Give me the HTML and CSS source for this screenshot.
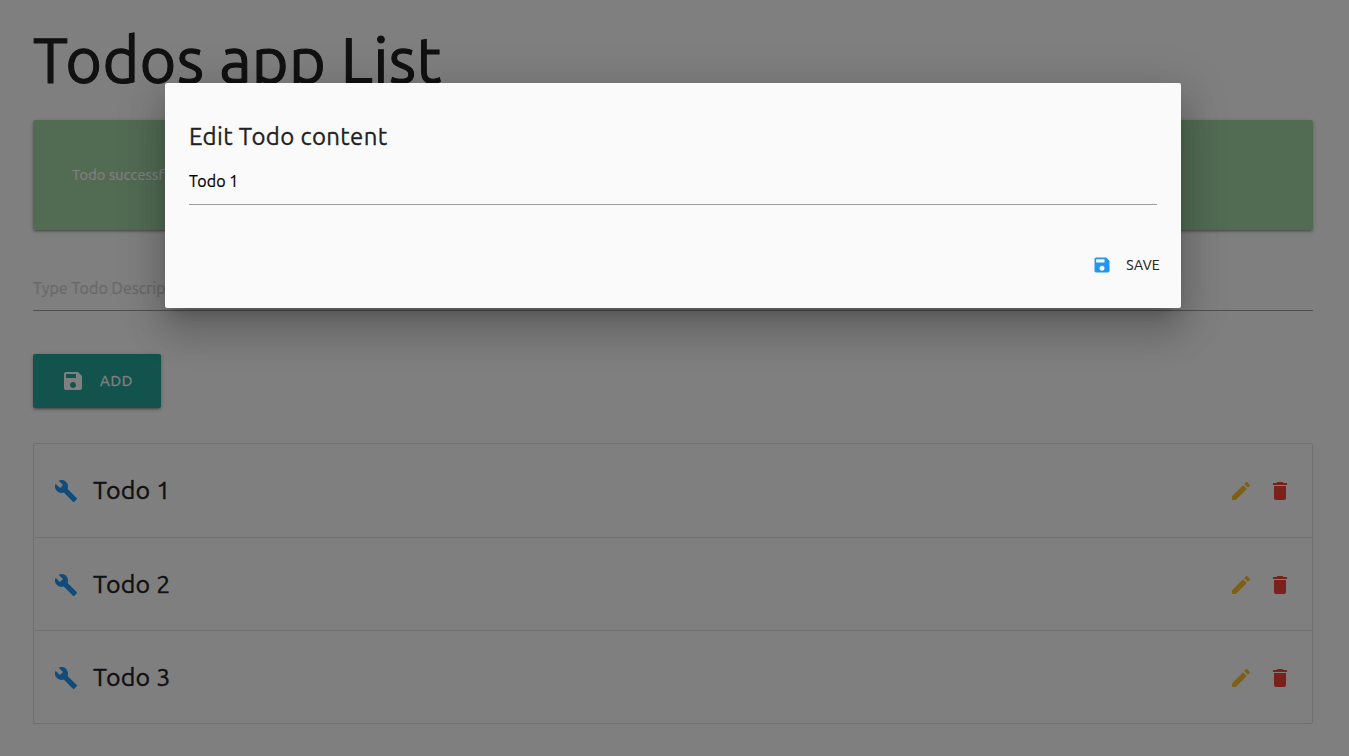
FILE: index.html
```html
<!DOCTYPE html>
<html lang="en">
<head>
<meta charset="utf-8">
<title>Todos app</title>
<link rel="stylesheet" href="styles.css">
</head>
<body>
<svg class="sprite" width="0" height="0">
  <symbol id="save" viewBox="0 0 24 24"><path d="M17 3H5c-1.11 0-2 .9-2 2v14c0 1.1.89 2 2 2h14c1.1 0 2-.9 2-2V7l-4-4zm-5 16c-1.66 0-3-1.34-3-3s1.34-3 3-3 3 1.34 3 3-1.34 3-3 3zm3-10H5V5h10v4z"/></symbol>
  <symbol id="build" viewBox="0 0 24 24"><path d="M22.7 19l-9.1-9.1c.9-2.3.4-5-1.5-6.9-2-2-5-2.4-7.4-1.3L9 6 6 9 1.6 4.7C.4 7.1.9 10.1 2.9 12.1c1.9 1.9 4.6 2.4 6.9 1.5l9.1 9.1c.4.4 1 .4 1.4 0l2.3-2.3c.5-.4.5-1.1.1-1.4z"/></symbol>
  <symbol id="edit" viewBox="0 0 24 24"><path d="M3 17.250V21h3.750L17.810 9.940l-3.750-3.750L3 17.250zM20.710 7.040c.39-.39.39-1.020 0-1.410l-2.340-2.340c-.39-.39-1.020-.39-1.410 0l-1.830 1.830 3.750 3.750 1.830-1.830z"/></symbol>
  <symbol id="delete" viewBox="0 0 24 24"><path d="M6 19c0 1.100.9 2 2 2h8c1.100 0 2-.9 2-2V7H6v12zM19 4h-3.500l-1-1h-5l-1 1H5v2h14V4z"/></symbol>
</svg>
<main class="page">
  <h1 class="title"><span>Todos app List</span></h1>
  <div class="notice"><span>Todo successfully</span></div>
  <div class="field"><span>Type Todo Description</span></div>
  <button class="add"><svg class="icon"><use href="#save"/></svg><span class="add-label">ADD</span></button>
  <ul class="list">
    <li class="item"><svg class="icon blue"><use href="#build"/></svg><span class="name">Todo 1</span><svg class="icon small amber"><use href="#edit"/></svg><svg class="icon small red"><use href="#delete"/></svg></li>
    <li class="item"><svg class="icon blue"><use href="#build"/></svg><span class="name">Todo 2</span><svg class="icon small amber"><use href="#edit"/></svg><svg class="icon small red"><use href="#delete"/></svg></li>
    <li class="item"><svg class="icon blue"><use href="#build"/></svg><span class="name">Todo 3</span><svg class="icon small amber"><use href="#edit"/></svg><svg class="icon small red"><use href="#delete"/></svg></li>
  </ul>
</main>
<div class="overlay">
  <section class="modal">
    <h2 class="modal-title"><span>Edit Todo content</span></h2>
    <div class="modal-field"><span>Todo 1</span></div>
    <div class="modal-footer"><svg class="icon save-icon"><use href="#save"/></svg><span>SAVE</span></div>
  </section>
</div>
</body>
</html>
```
FILE: styles.css
```css
* { box-sizing: border-box; }
body { margin: 0; height: 756px; overflow: hidden; background: #fff; color: rgba(0,0,0,.87); font-family: Ubuntu, "Noto Sans", sans-serif; -webkit-text-stroke: .2px currentColor; }
h1, h2, ul { margin: 0; padding: 0; font-weight: 400; }
.sprite { display: block; height: 0; }
.icon { width: 24px; height: 24px; fill: currentColor; flex: none; -webkit-text-stroke: 0; }
.page { padding: 23px 36px 0 33px; }
.title { height: 97px; font-size: 63px; line-height: 74px; letter-spacing: .3px; white-space: nowrap; color: #222; -webkit-text-stroke: 1.1px #222; }
.notice { height: 110px; padding: 0 39px 2px; display: flex; align-items: center; border-radius: 2px; background: #a5d6a7; color: #fff; font-size: 14.5px; letter-spacing: .15px; box-shadow: 0 2px 2px 0 rgba(0,0,0,.14), 0 3px 1px -2px rgba(0,0,0,.12), 0 1px 5px 0 rgba(0,0,0,.2); }
.field { margin-top: 36px; height: 45px; line-height: 44px; border-bottom: 1px solid #9e9e9e; color: #d1d1d1; font-size: 16px; letter-spacing: .05px; }
.add { margin-top: 43px; width: 128px; height: 54px; padding: 0 0 0 28px; display: flex; align-items: center; gap: 15px; border: 0; border-radius: 2px; background: #26a69a; color: #fff; font: 15px Ubuntu, "Noto Sans", sans-serif; letter-spacing: .65px; box-shadow: 0 2px 2px 0 rgba(0,0,0,.14), 0 3px 1px -2px rgba(0,0,0,.12), 0 1px 5px 0 rgba(0,0,0,.2); }
.add-label { padding-bottom: 2px; -webkit-text-stroke: .3px #fff; }
.list { margin-top: 35px; height: 281px; display: grid; grid-template-rows: 94px 93px 92px; border: 1px solid #e0e0e0; border-radius: 2px; list-style: none; }
.item { display: flex; align-items: center; padding: 0 20px; border-bottom: 1px solid #e0e0e0; }
.item + .item { padding-top: 2px; }
.item:last-child { border-bottom: 0; }
.name { flex: 1; margin-left: 15px; padding-bottom: 2px; font-size: 25px; line-height: 36px; letter-spacing: .2px; color: #222; -webkit-text-stroke: .4px #222; }
.small { margin-left: 15px; }
.blue { color: #2196f3; }
.amber { color: #fbc02d; }
.red { color: #f44336; }
.overlay { position: absolute; inset: 0; padding: 83px 168px 0 165px; background: rgba(0,0,0,.5); }
.modal { height: 225px; padding: 37px 24px 0; border-radius: 2px; background: #fafafa; box-shadow: 0 24px 38px 3px rgba(0,0,0,.14), 0 9px 46px 8px rgba(0,0,0,.12), 0 11px 15px -7px rgba(0,0,0,.2); }
.modal-title { height: 39px; font-size: 24px; line-height: 34px; letter-spacing: .36px; color: #222; -webkit-text-stroke: .3px #222; }
.modal-field { height: 46px; line-height: 44px; border-bottom: 1px solid #9e9e9e; color: #000; font-size: 16px; letter-spacing: .1px; }
.modal-footer { height: 72px; margin-top: 24px; margin-right: -3px; display: flex; justify-content: flex-end; align-items: center; gap: 14px; font-size: 14px; letter-spacing: .3px; }
.save-icon { width: 20px; height: 20px; color: #2196f3; }
```
